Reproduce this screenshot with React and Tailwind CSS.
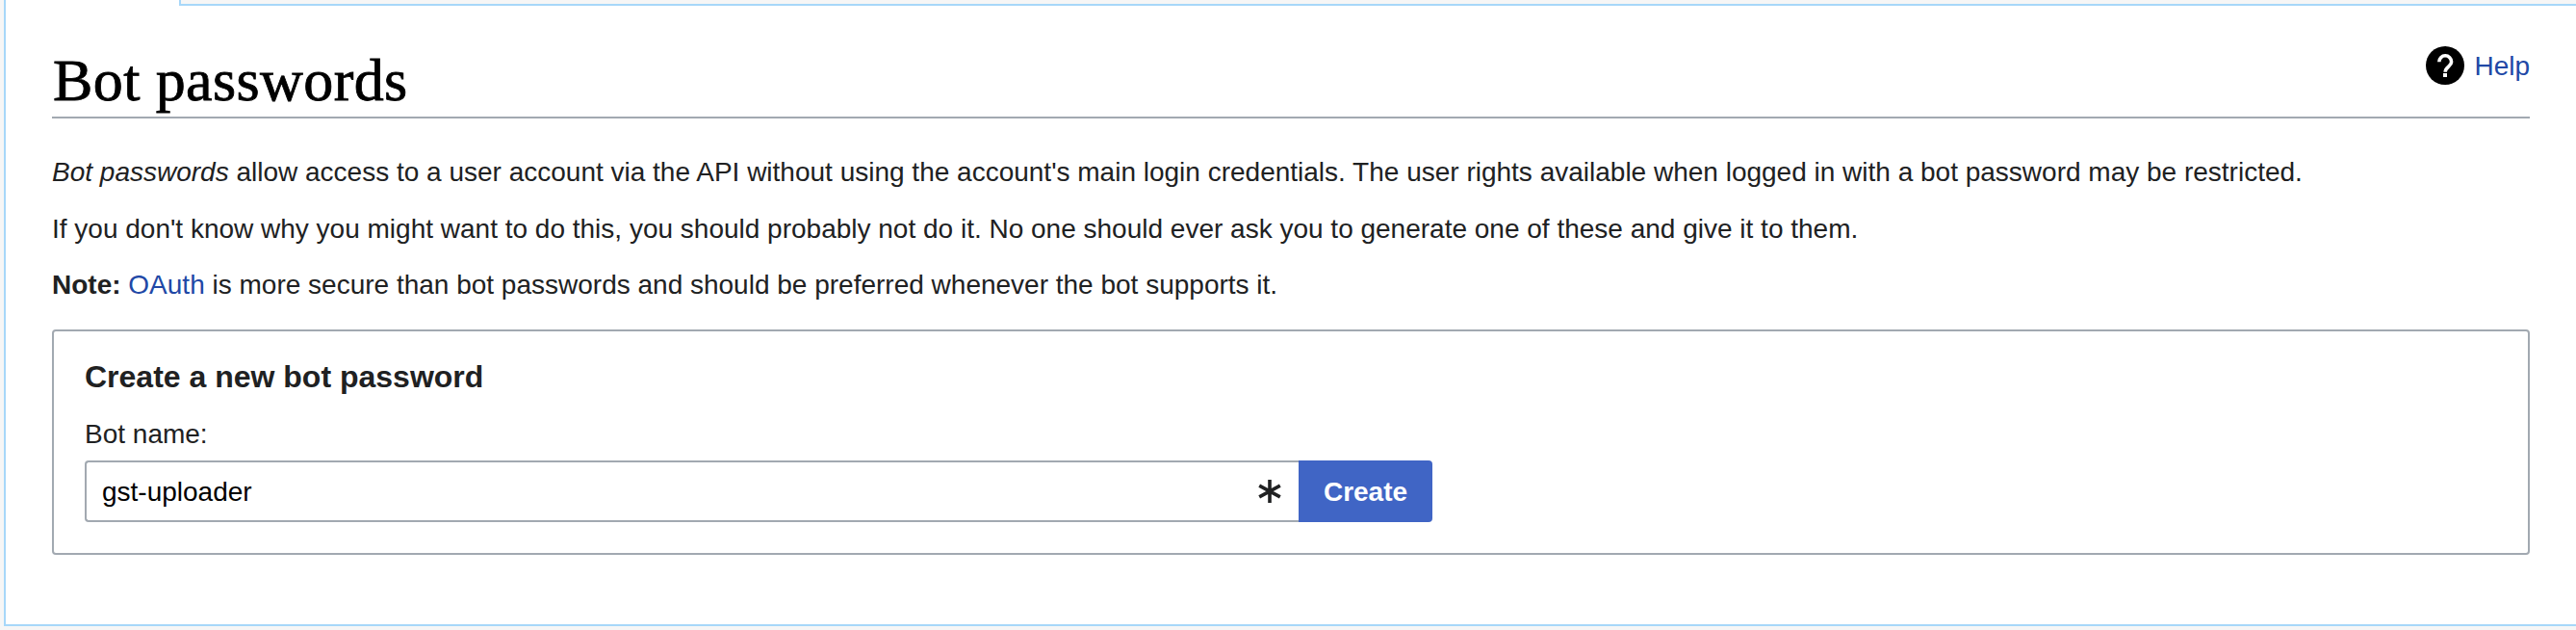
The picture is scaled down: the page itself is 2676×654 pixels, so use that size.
export default function App() {
  return (
    <div className="flex h-[654px] w-[2676px] flex-col overflow-hidden bg-[#f6f6f6] pl-1 font-['Liberation_Sans',Arial,sans-serif] text-[28px] leading-[44.8px] text-[#202122]">
      <div className="flex h-1.5 shrink-0 bg-white">
        <div className="w-[182px] border-l-2 border-[#a7d7f9]" />
        <div className="grow border-b-2 border-l-2 border-[#a7d7f9] bg-[#f6f6f6]" />
      </div>
      <main className="flex h-[644px] shrink-0 flex-col border-b-2 border-l-2 border-[#a7d7f9] bg-white pr-12 pl-12">
        <header className="flex h-[117px] shrink-0 justify-between border-b-2 border-[#a2a9b1]">
          <h1 className="pt-[39px] pl-px font-['Liberation_Serif',serif] text-[62px] leading-[76px] tracking-[0.4px] whitespace-nowrap text-black [-webkit-text-stroke:0.8px_black]">
            Bot passwords
          </h1>
          <a className="mt-[42px] flex h-10 items-center gap-2.5 text-[#2148a6]">
            <svg className="size-10" viewBox="0 0 40 40" aria-hidden="true">
              <circle cx="20" cy="20" r="20" fill="#000" />
              <path d="M13.8 16.2a6.4 6.4 0 0 1 12.8 0c0 4.8-6.4 5-6.4 10.6" fill="none" stroke="#fff" strokeWidth="3.6" />
              <path d="M18 28h4v4h-4z" fill="#fff" />
            </svg>
            <span className="pt-0.5">Help</span>
          </a>
        </header>
        <section className="flex h-[195.4px] shrink-0 flex-col gap-3.5 pt-[34px] whitespace-nowrap">
          <p><i>Bot passwords</i> allow access to a user account via the API without using the account's main login credentials. The user rights available when logged in with a bot password may be restricted.</p>
          <p>If you don't know why you might want to do this, you should probably not do it. No one should ever ask you to generate one of these and give it to them.</p>
          <p className="-mt-px"><b>Note:</b> <a className="text-[#2148a6]">OAuth</a> is more secure than bot passwords and should be preferred whenever the bot supports it.</p>
        </section>
        <form className="mt-[23.6px] h-[234px] shrink-0 rounded-[4px] border-2 border-[#a2a9b1] px-8 pt-[27px]">
          <h2 className="text-[32px] leading-[40px] font-bold">Create a new bot password</h2>
          <label className="mt-5 block h-[47px] leading-[40px]">Bot name:</label>
          <div className="flex h-16 w-[1400px]">
            <div className="flex w-[1261px] items-center justify-between rounded-l-[4px] border-2 border-r-0 border-[#a2a9b1] pr-[18px] pl-4 text-black">
              <span className="pt-0.5">gst-uploader</span>
              <svg className="size-6" viewBox="0 0 24 24" fill="none" stroke="#202122" strokeWidth="3.6" aria-hidden="true">
                <path d="M12 0v24M1.2 6.2l21.6 11.6M22.8 6.2L1.2 17.8" />
              </svg>
            </div>
            <button type="button" className="w-[139px] rounded-r-[4px] bg-[#4065c5] pt-0.5 font-bold text-white">Create</button>
          </div>
        </form>
      </main>
    </div>
  );
}
